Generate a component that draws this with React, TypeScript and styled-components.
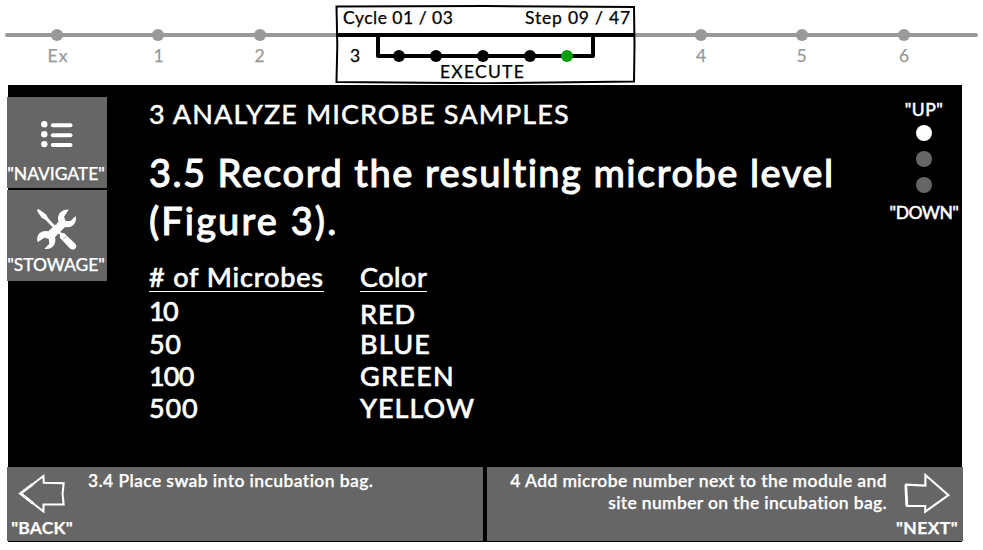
import React from 'react';
import styled, { createGlobalStyle } from 'styled-components';

const GlobalStyle = createGlobalStyle`
  * { box-sizing: border-box; }
  body { margin: 0; background: #fff; font-family: Lato, "Open Sans", sans-serif; overflow: hidden; }
  svg { display: block; }
`;

const Page = styled.div`
  width: 983px;
  height: 550px;
  display: flex;
  flex-direction: column;
`;

/* Small labels shared by the whole screen */
const Small = styled.span<{ $track?: number; $weight?: number; $ink?: number }>`
  display: block;
  font-size: 17.5px;
  line-height: 22px;
  white-space: nowrap;
  font-weight: ${p => p.$weight ?? 400};
  letter-spacing: ${p => p.$track ?? 0}px;
  -webkit-text-stroke: ${p => p.$ink ?? 0.25}px currentColor;
`;

/* Timeline */
const Timeline = styled.header`
  position: relative;
  height: 85px;
  padding-top: 28px;
  color: #999;
`;
const MarkRow = styled.div`
  display: grid;
  grid-template-columns: 8px 100px 101px 101px 341px 100px 101px 104px;
  margin-top: 3px;
`;
const Mark = styled(Small)`
  text-align: center;
`;
const CycleCard = styled.section`
  position: absolute;
  left: 335px;
  top: 5px;
  width: 301px;
  height: 79px;
  color: #000;
`;
const CardFrame = styled.svg`
  position: absolute;
  inset: 0;
`;
const CardBody = styled.div`
  position: relative;
  height: 100%;
  display: flex;
  flex-direction: column;
`;
const CardTop = styled.div`
  display: flex;
  justify-content: space-between;
  padding: 2px 5px 0 8px;
  height: 40px;
`;
const StepNumber = styled(Small)`
  height: 16px;
  padding-left: 15px;
`;
const Phase = styled(Small)`
  padding-left: 105px;
`;

/* Work area */
const Screen = styled.main`
  width: 956px;
  height: 457px;
  margin-left: 7px;
  display: flex;
  flex-direction: column;
  background: linear-gradient(90deg, #fff 0 1px, #000 1px 955px, #fff 955px);
  color: #fff;
`;
const Work = styled.div`
  height: 382px;
  display: flex;
`;
const SideNav = styled.nav`
  width: 100px;
  padding-top: 12px;
  display: flex;
  flex-direction: column;
  gap: 2px;
`;
const SideButton = styled.button<{ $lift: number }>`
  width: 100px;
  height: 91px;
  padding: 0 2px ${p => p.$lift}px 0;
  border: 0;
  font: inherit;
  color: #fff;
  background: #666;
  display: flex;
  flex-direction: column;
  justify-content: flex-end;
  align-items: center;
`;
const SideIcon = styled.div`
  height: 66px;
  width: 98px;
`;
const Content = styled.article`
  flex: 1;
  padding: 13px 0 0 42px;
`;
const SectionTitle = styled.h2`
  margin: 0;
  font-size: 27px;
  line-height: 32px;
  font-weight: 500;
  letter-spacing: 1.08px;
  white-space: nowrap;
  -webkit-text-stroke: 0.35px #fff;
`;
const Instruction = styled.h1`
  margin: 18px 0 0;
  font-size: 38px;
  line-height: 48px;
  font-weight: 500;
  white-space: nowrap;
  -webkit-text-stroke: 0.9px #fff;
`;
const InstructionLine = styled.span<{ $track: number }>`
  display: block;
  letter-spacing: ${p => p.$track}px;
`;
const Table = styled.div`
  display: grid;
  grid-template-columns: 211px 1fr;
  margin-top: 18px;
  font-size: 27px;
  font-weight: 500;
  -webkit-text-stroke: 0.55px #fff;
`;
const Column = styled.div<{ $drop: number; $first: number }>`
  display: flex;
  flex-direction: column;
  align-items: flex-start;
  > :nth-child(2) { margin-top: ${p => p.$drop}px; height: ${p => p.$first}px; }
`;
const HeadCell = styled.div<{ $track: number }>`
  line-height: 29px;
  border-bottom: 1px solid #fff;
  letter-spacing: ${p => p.$track}px;
`;
const Cell = styled.div<{ $track: number }>`
  line-height: 32px;
  height: 32px;
  letter-spacing: ${p => p.$track}px;
`;
const Scroller = styled.aside`
  width: 76px;
  margin-right: 1px;
  padding-top: 14px;
  display: flex;
  flex-direction: column;
  align-items: center;
`;
const Dots = styled.div`
  display: flex;
  flex-direction: column;
  gap: 10px;
  padding: 4px 0 9px;
`;
const Dot = styled.i<{ $on?: boolean }>`
  width: 16px;
  height: 16px;
  border-radius: 50%;
  background: ${p => (p.$on ? '#fff' : '#666')};
`;

/* Footer */
const Footer = styled.footer`
  display: grid;
  grid-template-columns: 476px 476px;
  column-gap: 4px;
  height: 74px;
`;
const StepButton = styled.div<{ $next?: boolean }>`
  display: flex;
  flex-direction: ${p => (p.$next ? 'row-reverse' : 'row')};
  background: #666;
  padding: 3px ${p => (p.$next ? '4px' : '0')} 0 ${p => (p.$next ? '0' : '4px')};
`;
const ArrowBox = styled.div<{ $next?: boolean }>`
  width: ${p => (p.$next ? 64 : 62)}px;
  display: flex;
  flex-direction: column;
  align-items: center;
  gap: 3px;
`;
const StepText = styled.div<{ $next?: boolean }>`
  flex: 1;
  display: flex;
  flex-direction: column;
  align-items: ${p => (p.$next ? 'flex-end' : 'flex-start')};
  padding: 0 ${p => (p.$next ? 8 : 0)}px 0 ${p => (p.$next ? 0 : 15)}px;
`;

const ListIcon = () => (
  <svg width="98" height="66" viewBox="0 0 98 66" fill="#fff">
    {[27.3, 37.3, 47.1].map(y => (
      <g key={y}>
        <circle cx="37.3" cy={y} r="3.2" />
        <rect x="43.8" y={y - 1} width="21.7" height="4" rx="2" />
      </g>
    ))}
  </svg>
);

const ToolsIcon = () => (
  <svg width="98" height="66" viewBox="0 0 98 66">
    <g transform="translate(29.7 20.7) scale(.3333)" fill="#fff">
      <path d="M96 3L82 24L87 37L101 37L117 22Q120 38 111 48Q101 58 85 55L55 85Q59 103 48 114Q38 123 23 120L38 105L36 91L23 87L3 101Q-2 85 8 74Q18 65 35 68L65 40Q61 22 71 11Q82 1 96 3Z" />
      <path d="M12 -1L48 39" stroke="#666" strokeWidth="3" transform="translate(15 12)" opacity="0.4" />
      <path d="M1 3Q5-1 11 5L29 18L34 28L75 73L83 74L88 79L116 105Q122 114 115 120Q107 126 99 119L74 92L69 87L70 79L27 34L15 27L3 10Z" />
      <path d="M80 91L92 80" stroke="#666" strokeWidth="1.6" />
    </g>
  </svg>
);

const BackArrow = () => (
  <svg width="48" height="44" viewBox="0 0 48 44" fill="none" stroke="#fff" strokeWidth="2.1">
    <path d="M26 5L3.2 22.5L26 40.5L26.2 33.5L46.2 33.4L45.2 23L46.2 12.2L26.4 11.8Z" transform="translate(-.6 1)" />
    <path d="M15 14L2.6 23.5L15 33.3" strokeWidth="2.8" />
  </svg>
);
const NextArrow = () => (
  <svg width="48" height="44" viewBox="0 0 48 44" fill="none" stroke="#fff" strokeWidth="2.1">
    <path d="M22.4 5L45.4 25.2L22.2 41.7L22.3 36L4 36L2.9 25L3 14.6L22.4 15.6Z" />
    <path d="M2.8 15L3.9 36" strokeWidth="2.7" />
  </svg>
);

const marks: [string, number][] = [['Ex', 1], ['1', 0], ['2', 0], ['', 0], ['4', 0], ['5', 0], ['6', 0]];
const counts: [string, number][] = [['10', -1.6], ['50', 0.6], ['100', -0.8], ['500', 0.8]];
const colors: [string, number][] = [['RED', 1], ['BLUE', 1.2], ['GREEN', 1.3], ['YELLOW', 1]];

export default function App() {
  return (
    <>
      <GlobalStyle />
      <Page>
        <Timeline>
          <svg width="983" height="14" viewBox="0 0 983 14">
            <path d="M7 7H976" stroke="#999" strokeWidth="4" strokeLinecap="round" />
            {[57, 158, 260, 701, 802, 904].map(x => <circle key={x} cx={x} cy="7" r="6.1" fill="#999" />)}
          </svg>
          <MarkRow>
            <span />
            {marks.map(([t, s], i) => <Mark key={i} $track={s}>{t}</Mark>)}
          </MarkRow>
          <CycleCard>
            <CardFrame width="301" height="79" viewBox="0 0 301 79" fill="none" stroke="#000">
              <path d="M1.5 1.5L150 1L299 2L299.5 40L299 76.5L150 78.3L1.5 77L2.3 40Z" fill="#fff" strokeWidth="2" />
              <path d="M1 30H300" strokeWidth="4" />
              <path d="M43 30V51H258V30" strokeWidth="4" strokeLinejoin="round" />
              {[64, 101, 148, 195].map(x => <circle key={x} cx={x} cy="51" r="6" fill="#000" stroke="none" />)}
              <circle cx="232" cy="51" r="6" fill="#009e0f" stroke="none" />
            </CardFrame>
            <CardBody>
              <CardTop>
                <Small $track={0.5}>Cycle 01 / 03</Small>
                <Small $track={0.8}>Step 09 / 47</Small>
              </CardTop>
              <StepNumber>3</StepNumber>
              <Phase $track={1.25}>EXECUTE</Phase>
            </CardBody>
          </CycleCard>
        </Timeline>
        <Screen>
          <Work>
            <SideNav>
              <SideButton $lift={3}>
                <SideIcon><ListIcon /></SideIcon>
                <Small $weight={500} $track={-0.1}>"NAVIGATE"</Small>
              </SideButton>
              <SideButton $lift={5}>
                <SideIcon><ToolsIcon /></SideIcon>
                <Small $weight={500} $track={-0.1}>"STOWAGE"</Small>
              </SideButton>
            </SideNav>
            <Content>
              <SectionTitle>3 ANALYZE MICROBE SAMPLES</SectionTitle>
              <Instruction>
                <InstructionLine $track={1.47}>3.5 Record the resulting microbe level</InstructionLine>
                <InstructionLine $track={2.1}>(Figure 3).</InstructionLine>
              </Instruction>
              <Table>
                <Column $drop={3} $first={33}>
                  <HeadCell $track={0.86}># of Microbes</HeadCell>
                  {counts.map(([t, s]) => <Cell key={t} $track={s}>{t}</Cell>)}
                </Column>
                <Column $drop={6} $first={30}>
                  <HeadCell $track={0.5}>Color</HeadCell>
                  {colors.map(([t, s]) => <Cell key={t} $track={s}>{t}</Cell>)}
                </Column>
              </Table>
            </Content>
            <Scroller>
              <Small $weight={500} $track={0.4} $ink={0.4}>"UP"</Small>
              <Dots><Dot $on /><Dot /><Dot /></Dots>
              <Small $weight={500} $track={-0.5} $ink={0.4}>"DOWN"</Small>
            </Scroller>
          </Work>
          <Footer>
            <StepButton>
              <ArrowBox>
                <BackArrow />
                <Small $weight={700} $track={0.2}>"BACK"</Small>
              </ArrowBox>
              <StepText>
                <Small $weight={600} $track={0.4}>3.4 Place swab into incubation bag.</Small>
              </StepText>
            </StepButton>
            <StepButton $next>
              <ArrowBox $next>
                <NextArrow />
                <Small $weight={700} $track={0.4}>"NEXT"</Small>
              </ArrowBox>
              <StepText $next>
                <Small $weight={600} $track={0.38}>4 Add microbe number next to the module and</Small>
                <Small $weight={600} $track={0.33}>site number on the incubation bag.</Small>
              </StepText>
            </StepButton>
          </Footer>
        </Screen>
      </Page>
    </>
  );
}
